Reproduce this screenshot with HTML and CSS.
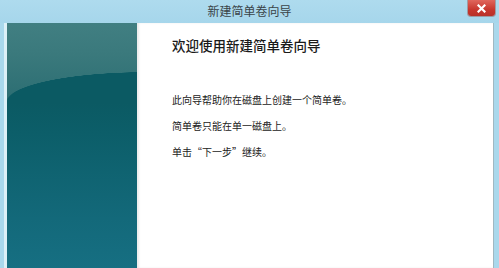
FILE: index.html
```html
<!DOCTYPE html>
<html lang="zh-CN">
<head>
<meta charset="utf-8">
<title>新建简单卷向导</title>
<link rel="stylesheet" href="styles.css">
</head>
<body>
<div class="window">
  <div class="titlebar">
    <span class="title">新建简单卷向导</span>
    <div class="close">
      <svg width="9" height="9" viewBox="0 0 9 9"><path d="M1.5 1.5 L7.5 7.5 M7.5 1.5 L1.5 7.5" stroke="#fff" stroke-width="2.2" stroke-linecap="square"/></svg>
    </div>
  </div>
  <div class="frame">
    <div class="sidebar"></div>
    <div class="main">
      <h1 class="heading">欢迎使用新建简单卷向导</h1>
      <p class="line first">此向导帮助你在磁盘上创建一个简单卷。</p>
      <p class="line">简单卷只能在单一磁盘上。</p>
      <p class="line">单击“下一步”继续。</p>
    </div>
  </div>
</div>
</body>
</html>
```

FILE: styles.css
```css
html, body {
  margin: 0;
  padding: 0;
  width: 499px;
  height: 268px;
  overflow: hidden;
  background: #a9d8ec;
}

.window {
  display: flex;
  flex-direction: column;
  width: 499px;
  height: 268px;
  background: #a9d8ec;
  font-family: "Noto Sans CJK SC", "Noto Sans", sans-serif;
}

.titlebar {
  position: relative;
  height: 23px;
  display: flex;
  align-items: center;
  justify-content: center;
  background: linear-gradient(#aedbee, #a6d6eb);
}

.title {
  font-size: 12px;
  line-height: 14px;
  color: #3a4448;
  margin-top: -1px;
}

.close {
  position: absolute;
  top: 0;
  right: 4px;
  width: 27px;
  height: 16px;
  display: flex;
  align-items: center;
  justify-content: center;
  background: linear-gradient(#e0675d, #c8372e 60%, #b83129);
  border-radius: 0 0 3px 3px;
  box-shadow: 0 0 0 1px rgba(140, 40, 30, 0.35);
}

.frame {
  flex: 1;
  display: flex;
  padding: 0 5px 0 4px;
}

.sidebar {
  width: 130px;
  border-left: 3px solid #dcf0f7;
  background:
    radial-gradient(ellipse 141px 30px at 140px 79px, #0b5a63 99%, transparent 100%) 0 0 / 100% 80px no-repeat,
    linear-gradient(#417f82, #3a797c 40%, #2b6d72) 0 0 / 100% 80px no-repeat,
    linear-gradient(#0b5a63 80px, #0c5e69 45%, #13697a 80%, #166f82);
}

.main {
  flex: 1;
  background: #ffffff;
  padding: 14px 0 0 35px;
  border-right: 1px solid #9fb8c2;
  box-shadow: inset 2px 0 2px rgba(0, 0, 0, 0.08);
}

.heading {
  margin: 0;
  font-size: 13.5px;
  line-height: 16px;
  font-weight: 500;
  color: #1a1a1a;
}

.line {
  margin: 12px 0 0 0;
  font-size: 10px;
  line-height: 14px;
  color: #222222;
}

.line.first {
  margin-top: 40px;
}
```
